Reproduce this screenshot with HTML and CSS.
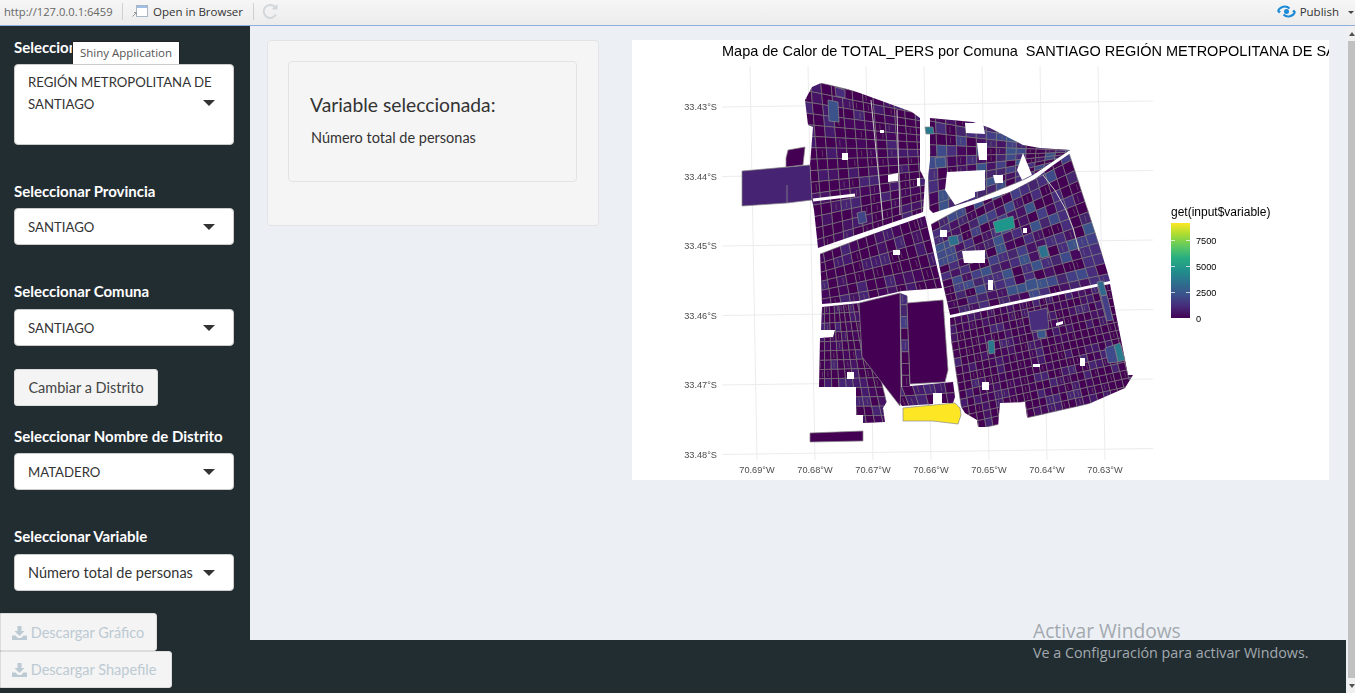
FILE: index.html
```html
<!DOCTYPE html>
<html lang="es">
<head>
  <meta charset="UTF-8">
  <title>Shiny Application</title>
  <link rel="stylesheet" href="styles.css">
</head>
<body>

  <div class="toolbar">
    <span class="url">http://127.0.0.1:6459</span>
    <span class="sep"></span>
    <svg class="tb-icon" width="16" height="14" viewBox="0 0 16 14">
      <rect x="4.500" y="1.500" width="11" height="11" fill="#fff" stroke="#a9b6c6"/>
      <rect x="5" y="2" width="10" height="2" fill="#9fc0e4"/>
      <path d="M0.500 12.500 L4 9 M2 8.500 H4.500 V11" fill="none" stroke="#9a9a9a"/>
    </svg>
    <span class="tb-text">Open in Browser</span>
    <span class="sep sep-2"></span>
    <svg class="tb-icon" width="17" height="17" viewBox="0 0 17 17">
      <path d="M14 11.500 A6.500 6.500 0 1 1 13 4" fill="none" stroke="#d3d6da" stroke-width="2"/>
      <path d="M9.500 6.500 H15.500 V1 Z" fill="#d3d6da"/>
    </svg>
    <span class="tb-spacer"></span>
    <svg class="tb-icon" width="19" height="13" viewBox="0 0 19 13">
      <path d="M1 6 C3 1.500 9 0 12.500 3.500 M18 7 C16 11.500 10 13 6.500 9.500" fill="none" stroke="#1c8ad6" stroke-width="2"/>
      <circle cx="9.500" cy="6.500" r="2.500" fill="#1c8ad6"/>
      <path d="M0 6 H4 L2 8.500 Z M15 7 H19 L17 4.500 Z" fill="#1c8ad6"/>
    </svg>
    <span class="tb-text publish">Publish</span>
    <span class="tb-caret"></span>
  </div>

  <div class="shell">
    <aside class="sidebar">
      <div class="tooltip">Shiny Application</div>

      <div class="field">
        <label class="field-label">Seleccionar Región</label>
        <div class="select select-tall select-caps">REGIÓN METROPOLITANA DE SANTIAGO</div>
      </div>
      <div class="field">
        <label class="field-label">Seleccionar Provincia</label>
        <div class="select select-caps">SANTIAGO</div>
      </div>
      <div class="field field-low">
        <label class="field-label">Seleccionar Comuna</label>
        <div class="select select-caps">SANTIAGO</div>
      </div>
      <button class="btn btn-switch">Cambiar a Distrito</button>
      <div class="field">
        <label class="field-label">Seleccionar Nombre de Distrito</label>
        <div class="select select-caps">MATADERO</div>
      </div>
      <div class="field field-low">
        <label class="field-label">Seleccionar Variable</label>
        <div class="select">Número total de personas</div>
      </div>
      <button class="btn btn-download btn-first">
        <svg class="dl-icon" width="15" height="14" viewBox="0 0 15 14"><path d="M5.500 0 H9.500 V5 H12.500 L7.500 10 L2.500 5 H5.500 Z M0 9.500 H3.500 L6 12 H9 L11.500 9.500 H15 V14 H0 Z"/></svg>
        Descargar Gráfico
      </button>
      <button class="btn btn-download btn-second">
        <svg class="dl-icon" width="15" height="14" viewBox="0 0 15 14"><path d="M5.500 0 H9.500 V5 H12.500 L7.500 10 L2.500 5 H5.500 Z M0 9.500 H3.500 L6 12 H9 L11.500 9.500 H15 V14 H0 Z"/></svg>
        Descargar Shapefile
      </button>
    </aside>

    <div class="content">
      <main class="main">
        <div class="well">
          <div class="well well-inner">
            <h3>Variable seleccionada:</h3>
            <p>Número total de personas</p>
          </div>
        </div>

        <svg class="plot" id="plot" width="697" height="440" viewBox="632 40 697 440">
          <defs>
            <linearGradient id="viridis" x1="0" y1="1" x2="0" y2="0">
              <stop offset="0" stop-color="#440154"/>
              <stop offset="0.13" stop-color="#472d7b"/>
              <stop offset="0.25" stop-color="#3b528b"/>
              <stop offset="0.38" stop-color="#2c728e"/>
              <stop offset="0.5" stop-color="#21908c"/>
              <stop offset="0.63" stop-color="#27ad81"/>
              <stop offset="0.75" stop-color="#5cc863"/>
              <stop offset="0.88" stop-color="#aadc32"/>
              <stop offset="1" stop-color="#fde725"/>
            </linearGradient>
          </defs>
          <rect x="632" y="40" width="697" height="440" fill="#fff"/>
          <g id="grid" class="grid"></g>
          <g id="map" class="map"></g>
          <text class="plot-title" x="722" y="56">Mapa de Calor de TOTAL_PERS por Comuna  SANTIAGO REGIÓN METROPOLITANA DE SANTIAGO</text>
          <g class="axis axis-y">
            <text x="717" y="110">33.43°S</text>
            <text x="717" y="180">33.44°S</text>
            <text x="717" y="249">33.45°S</text>
            <text x="717" y="319">33.46°S</text>
            <text x="717" y="388">33.47°S</text>
            <text x="717" y="458">33.48°S</text>
          </g>
          <g class="axis axis-x">
            <text x="757" y="473">70.69°W</text>
            <text x="815" y="473">70.68°W</text>
            <text x="873" y="473">70.67°W</text>
            <text x="931" y="473">70.66°W</text>
            <text x="989" y="473">70.65°W</text>
            <text x="1047" y="473">70.64°W</text>
            <text x="1105" y="473">70.63°W</text>
          </g>
          <text class="legend-title" x="1171" y="216">get(input$variable)</text>
          <rect x="1171" y="223" width="19" height="95" fill="url(#viridis)"/>
          <path class="legend-ticks" d="M1171 240.500 h4 M1186 240.500 h4 M1171 266.500 h4 M1186 266.500 h4 M1171 292.500 h4 M1186 292.500 h4"/>
          <g class="legend-labels">
            <text x="1196" y="244">7500</text>
            <text x="1196" y="270">5000</text>
            <text x="1196" y="296">2500</text>
            <text x="1196" y="322">0</text>
          </g>
        </svg>

        <div class="watermark">
          <div class="wm-big">Activar Windows</div>
          <div class="wm-small">Ve a Configuración para activar Windows.</div>
        </div>
      </main>
      <footer class="footer"></footer>
    </div>

    <div class="scrollbar">
      <span class="sb-btn"><i class="sb-up"></i></span>
      <span class="sb-track"></span>
      <span class="sb-btn"><i class="sb-down"></i></span>
    </div>
  </div>

  <script src="map.js"></script>
</body>
</html>
```

FILE: styles.css
```css
* {
  box-sizing: border-box;
}
html, body {
  height: 100%;
}
body {
  margin: 0;
  overflow: hidden;
  display: flex;
  flex-direction: column;
  font-family: Lato, "Noto Sans", sans-serif;
  font-size: 14.5px;
  color: #333;
  background: #ecf0f5;
}

/* viewer toolbar */
.toolbar {
  height: 26px;
  flex: none;
  display: flex;
  align-items: center;
  padding: 0 0 3px 4px;
  background: linear-gradient(#f6f6f6, #ececec);
  border-bottom: 1px solid #8eafdc;
  font-family: "Open Sans", sans-serif;
  font-size: 11.5px;
  color: #333;
}
.url {
  color: #666;
  width: 113px;
  font-size: 11.2px;
}
.sep {
  width: 1px;
  height: 17px;
  background: #d0d0d0;
  margin: 0 9px 0 5px;
}
.sep-2 {
  margin: 0 8px 0 10px;
}
.tb-text {
  margin-left: 5px;
  white-space: nowrap;
}
.tb-spacer {
  flex: 1;
}
.publish {
  margin-left: 4px;
}
.tb-caret {
  width: 0;
  height: 0;
  margin: 2px 1px 0 9px;
  border-left: 3px solid transparent;
  border-right: 3px solid transparent;
  border-top: 3px solid #444;
}

.shell {
  flex: 1;
  display: flex;
  min-height: 0;
}

/* sidebar */
.sidebar {
  position: relative;
  width: 250px;
  flex: none;
  padding-top: 12px;
  background: #222d32;
}
.tooltip {
  position: absolute;
  left: 72px;
  top: 15px;
  width: 108px;
  height: 24px;
  background: #fff;
  border: 1px solid #222;
  font-family: "Open Sans", sans-serif;
  font-size: 11.5px;
  line-height: 22px;
  text-align: center;
  color: #555;
}
.field {
  padding-left: 14px;
  margin-bottom: 37px;
}
.field-low .field-label {
  margin-bottom: 7px;
}
.field-label {
  display: block;
  height: 20px;
  line-height: 19px;
  margin-bottom: 6px;
  color: #fff;
  font-weight: 700;
  font-size: 15px;
  white-space: nowrap;
}
.select {
  position: relative;
  width: 220px;
  height: 37px;
  padding: 7px 30px 0 13px;
  line-height: 22px;
  background: #fff;
  border: 1px solid #ccc;
  border-radius: 4px;
  color: #333;
  white-space: nowrap;
}
.select-caps {
  font-size: 13.2px;
}
.select::after {
  content: "";
  position: absolute;
  right: 18px;
  top: 15px;
  border-left: 6px solid transparent;
  border-right: 6px solid transparent;
  border-top: 6px solid #333;
}
.select-tall {
  height: 81px;
  padding-top: 6px;
  padding-right: 8px;
  white-space: normal;
}
.select-tall::after {
  top: 35px;
}
.btn {
  display: block;
  height: 37px;
  padding: 0 13px;
  border: 1px solid #ddd;
  border-radius: 3px;
  background: #f4f4f4;
  font: inherit;
  color: #444;
  white-space: nowrap;
}
.btn-switch {
  margin: -14px 0 21px 14px;
  width: 144px;
}
.btn-download {
  color: #bccad3;
  text-align: left;
  padding: 0 0 0 11px;
  border-radius: 0 3px 3px 0;
}
.btn-first {
  margin-top: -15px;
  width: 157px;
  height: 38px;
}
.btn-second {
  width: 172px;
}
.dl-icon {
  fill: #bccad3;
  vertical-align: -2px;
}

/* main area */
.content {
  flex: 1;
  min-width: 0;
  display: flex;
  flex-direction: column;
  background: #ecf0f5;
}
.main {
  position: relative;
  flex: 1;
  display: flex;
  align-items: flex-start;
  gap: 33px;
  padding: 14px 0 0 17px;
}
.well {
  width: 332px;
  height: 186px;
  flex: none;
  padding: 20px;
  background: #f5f5f5;
  border: 1px solid #e3e3e3;
  border-radius: 4px;
}
.well-inner {
  width: 289px;
  height: 121px;
  padding: 32px 21px 0;
}
.well h3 {
  margin: 0;
  font-size: 19.3px;
  line-height: 22px;
  font-weight: 400;
  white-space: nowrap;
}
.well p {
  margin: 11px 0 0 1px;
  line-height: 22px;
}
.plot {
  flex: none;
  display: block;
}
.footer {
  height: 53px;
  flex: none;
  margin-right: 2px;
  background: #222d32;
}
.watermark {
  position: absolute;
  left: 783px;
  top: 593px;
  font-family: "Open Sans", sans-serif;
  color: #a3a9ae;
  pointer-events: none;
}
.wm-big {
  font-size: 19.2px;
  line-height: 24px;
}
.wm-small {
  font-size: 14.3px;
  line-height: 20px;
  white-space: nowrap;
}

/* scrollbar */
.scrollbar {
  width: 7px;
  flex: none;
  display: flex;
  flex-direction: column;
  background: #f0f0f0;
}
.sb-btn {
  height: 15px;
  flex: none;
  display: flex;
  align-items: center;
  justify-content: center;
}
.sb-track {
  flex: 1;
  background: #c1c1c1;
}
.sb-up, .sb-down {
  border-left: 3px solid transparent;
  border-right: 3px solid transparent;
}
.sb-up {
  border-bottom: 4px solid #505050;
}
.sb-down {
  border-top: 4px solid #505050;
}

/* plot parts */
.grid line {
  stroke: #ececec;
  stroke-width: 1;
}
.map {
  filter: blur(0.3px);
}
.plot-title {
  font-family: "Liberation Sans", sans-serif;
  font-size: 14.5px;
  fill: #000;
  white-space: pre;
}
.axis text {
  font-family: "Liberation Sans", sans-serif;
  font-size: 9.2px;
  fill: #4d4d4d;
}
.axis-y text {
  text-anchor: end;
}
.axis-x text {
  text-anchor: middle;
}
.legend-title {
  font-family: "Liberation Sans", sans-serif;
  font-size: 12px;
  fill: #000;
}
.legend-labels text {
  font-family: "Liberation Sans", sans-serif;
  font-size: 9.2px;
  fill: #000;
}
.legend-ticks {
  stroke: #fff;
  stroke-opacity: 0.7;
  fill: none;
}
```

FILE: map.js
```js
// draws the comuna map (block grids clipped to hand traced outlines)
const NS = "http://www.w3.org/2000/svg";
const grid = document.getElementById("grid");
const map = document.getElementById("map");
const defs = document.querySelector("#plot defs");

let seed = 7391;
function rnd() {
  seed = (seed * 16807) % 2147483647;
  return (seed - 1) / 2147483646;
}

function el(name, attrs, parent) {
  const node = document.createElementNS(NS, name);
  for (const k in attrs) node.setAttribute(k, attrs[k]);
  parent.appendChild(node);
  return node;
}

function pts(list) {
  return list.map(p => p[0].toFixed(1) + "," + p[1].toFixed(1)).join(" ");
}

// graticule
for (let i = 0; i < 6; i++) {
  const y = 107 + i * 69.5;
  el("line", { x1: 722, y1: y, x2: 1153, y2: y - 6 }, grid);
}
for (let i = 0; i < 7; i++) {
  el("line", { x1: 750 + i * 58, y1: 66, x2: 757 + i * 58, y2: 460 }, grid);
}

const LOW = ["#440154", "#440154", "#440154", "#440154", "#440154", "#440154", "#440154", "#46085c", "#46085c", "#471365", "#45196b", "#472374"];
const MID = ["#440154", "#440154", "#440154", "#46085c", "#471365", "#46256f", "#472d7b", "#472d7b", "#433e85", "#3f4a8a", "#3b528b"];

const districts = [
  { // north west
    quad: [[800, 78], [925, 108], [932, 212], [815, 252]], cols: 12, rows: 15, palette: LOW,
    outline: [[805, 100], [812, 87], [821, 83], [835, 84], [912, 112], [920, 118], [920, 170], [925, 180], [923, 212], [818, 248], [814, 210], [812, 200], [810, 165], [813, 127], [808, 125]]
  },
  { // north centre
    quad: [[925, 108], [1078, 146], [1072, 160], [930, 218]], cols: 15, rows: 9, palette: MID,
    outline: [[930, 118], [973, 122], [990, 128], [1023, 145], [1040, 148], [1070, 150], [1033, 175], [1010, 188], [933, 213], [925, 205], [930, 160]]
  },
  { // centre east
    quad: [[930, 225], [1068, 150], [1112, 284], [950, 316]], cols: 16, rows: 13, palette: MID,
    outline: [[930, 219], [1010, 192], [1035, 179], [1052, 166], [1072, 152], [1110, 281], [950, 315], [943, 285]]
  },
  { // centre west
    quad: [[815, 256], [925, 214], [947, 290], [822, 308]], cols: 13, rows: 6, palette: LOW,
    outline: [[820, 252], [925, 216], [942, 288], [902, 291], [858, 301], [822, 304]]
  },
  { // strip between the big blocks
    quad: [[900, 293], [907, 293], [910, 387], [902, 387]], cols: 1, rows: 8, palette: MID,
    outline: [[900, 293], [908, 296], [910, 386], [901, 387]]
  },
  { // south west
    quad: [[820, 305], [862, 302], [892, 425], [816, 425]], cols: 9, rows: 13, palette: LOW,
    outline: [[822, 307], [860, 303], [862, 357], [892, 393], [883, 408], [885, 422], [863, 423], [863, 415], [856, 415], [856, 387], [819, 387], [820, 338], [833, 337], [835, 330], [821, 330]]
  },
  { // below the big blocks
    quad: [[890, 385], [955, 380], [958, 405], [900, 408]], cols: 6, rows: 2, palette: LOW,
    outline: [[890, 388], [901, 387], [953, 382], [955, 397], [953, 403], [942, 403], [942, 393], [933, 393], [933, 404], [902, 406]]
  },
  { // south east
    quad: [[948, 318], [1110, 282], [1140, 392], [965, 432]], cols: 25, rows: 14, palette: LOW,
    outline: [[950, 318], [1110, 284], [1128, 375], [1133, 375], [1125, 388], [1093, 402], [1067, 415], [1037, 425], [1027, 417], [1025, 402], [1000, 403], [998, 427], [978, 427], [977, 420], [965, 413], [955, 397], [953, 380]]
  }
];

function lerp(a, b, t) {
  return [a[0] + (b[0] - a[0]) * t, a[1] + (b[1] - a[1]) * t];
}

function warp(q, u, v) {
  return lerp(lerp(q[0], q[1], u), lerp(q[3], q[2], u), v);
}

districts.forEach((d, i) => {
  const clip = el("clipPath", { id: "clip" + i }, defs);
  el("polygon", { points: pts(d.outline) }, clip);
  const g = el("g", { "clip-path": "url(#clip" + i + ")" }, map);
  for (let r = 0; r < d.rows; r++) {
    for (let c = 0; c < d.cols; c++) {
      const u0 = c / d.cols, u1 = (c + 1) / d.cols, v0 = r / d.rows, v1 = (r + 1) / d.rows;
      const cell = [warp(d.quad, u0, v0), warp(d.quad, u1, v0), warp(d.quad, u1, v1), warp(d.quad, u0, v1)];
      el("polygon", {
        points: pts(cell),
        fill: d.palette[Math.floor(rnd() * d.palette.length)],
        stroke: "#777",
        "stroke-width": 0.65
      }, g);
      // parcel lines inside a block
      if (rnd() < 0.3) {
        const u = u0 + (u1 - u0) * (0.3 + rnd() * 0.4);
        const a = warp(d.quad, u, v0 + (v1 - v0) * 0.2);
        const b = warp(d.quad, u, v0 + (v1 - v0) * 0.8);
        el("line", { x1: a[0], y1: a[1], x2: b[0], y2: b[1], stroke: "#777", "stroke-width": 0.5 }, g);
      }
    }
  }
});

const solids = [
  // standout blocks
  [[[828, 100], [838, 102], [839, 122], [829, 121]], "#3b528b"],
  [[[835, 87], [845, 90], [845, 98], [836, 96]], "#472d7b"],
  [[[857, 213], [865, 211], [867, 222], [859, 224]], "#414487"],
  [[[925, 127], [933, 127], [934, 134], [926, 134]], "#2a788e"],
  [[[935, 158], [945, 157], [946, 167], [936, 168]], "#3b528b"],
  [[[993, 222], [1013, 216], [1015, 228], [996, 233]], "#1f968b"],
  [[[948, 237], [957, 235], [959, 244], [950, 246]], "#2d708e"],
  [[[1038, 247], [1046, 245], [1049, 256], [1041, 258]], "#2c728e"],
  [[[988, 341], [994, 340], [995, 353], [989, 354]], "#2a788e"],
  [[[1114, 345], [1120, 343], [1125, 360], [1118, 362]], "#2a7b8e"],
  [[[1105, 348], [1114, 345], [1118, 362], [1108, 363]], "#3f4a8a"],
  [[[1097, 282], [1103, 281], [1107, 295], [1101, 296]], "#31688e"],
  [[[1101, 296], [1107, 295], [1113, 320], [1107, 321]], "#433e85"],
  [[[1025, 281], [1036, 278], [1038, 288], [1027, 291]], "#3b528b"],
  [[[1028, 312], [1047, 308], [1049, 329], [1031, 331]], "#472d7b"],
  [[[1037, 331], [1045, 330], [1046, 338], [1038, 338]], "#39568c"],
  // large plain blocks
  [[[859, 303], [900, 293], [901, 387], [900, 406], [862, 357]], "#440154"],
  [[[907, 303], [943, 300], [948, 370], [945, 382], [910, 384]], "#440154"],
  [[[810, 433], [863, 431], [863, 441], [810, 442]], "#440154"],
  [[[742, 171], [810, 165], [812, 200], [787, 203], [742, 206]], "#472374"],
  [[[788, 150], [805, 147], [803, 165], [786, 167], [786, 158]], "#440154"],
  [[[903, 408], [923, 406], [955, 403], [960, 408], [961, 415], [958, 424], [933, 421], [903, 421]], "#fde725"]
];
solids.forEach(s => {
  el("polygon", { points: pts(s[0]), fill: s[1], stroke: "#8a8a8a", "stroke-width": 0.7 }, map);
});

const holes = [
  [[842, 153], [848, 153], [848, 160], [842, 160]],
  [[888, 175], [898, 173], [898, 181], [888, 182]],
  [[880, 130], [884, 130], [884, 133], [880, 133]],
  [[917, 178], [920, 178], [920, 186], [917, 186]],
  [[965, 123], [983, 123], [985, 134], [966, 133]],
  [[977, 143], [987, 143], [987, 160], [979, 160]],
  [[947, 172], [985, 170], [985, 190], [975, 192], [975, 197], [955, 205], [945, 190]],
  [[993, 175], [1003, 175], [1003, 183], [995, 183]],
  [[1017, 170], [1023, 153], [1032, 175], [1022, 180]],
  [[893, 250], [900, 250], [900, 255], [893, 255]],
  [[962, 251], [985, 250], [985, 263], [964, 263]],
  [[988, 280], [993, 280], [993, 290], [988, 290]],
  [[1023, 228], [1027, 228], [1027, 233], [1023, 233]],
  [[940, 230], [947, 230], [947, 237], [940, 237]],
  [[847, 372], [854, 372], [854, 379], [847, 379]],
  [[1080, 358], [1085, 358], [1085, 366], [1080, 366]],
  [[1033, 364], [1040, 364], [1040, 367], [1033, 367]],
  [[1056, 323], [1063, 321], [1063, 324], [1056, 326]],
  [[982, 382], [989, 382], [989, 390], [982, 390]]
];
holes.forEach(h => el("polygon", { points: pts(h), fill: "#fff" }, map));

// light street lines and the gap in the north west block
el("path", { d: "M813 200 L855 195", stroke: "#fff", "stroke-width": 3, fill: "none" }, map);
el("path", { d: "M871 100 L883 220 M897 110 L900 215 M1043 175 Q1070 205 1079 251", stroke: "#c9c9c9", "stroke-width": 1, fill: "none" }, map);
el("path", { d: "M787 185 L787 203", stroke: "#8a8a8a", "stroke-width": 0.8, fill: "none" }, map);
```
